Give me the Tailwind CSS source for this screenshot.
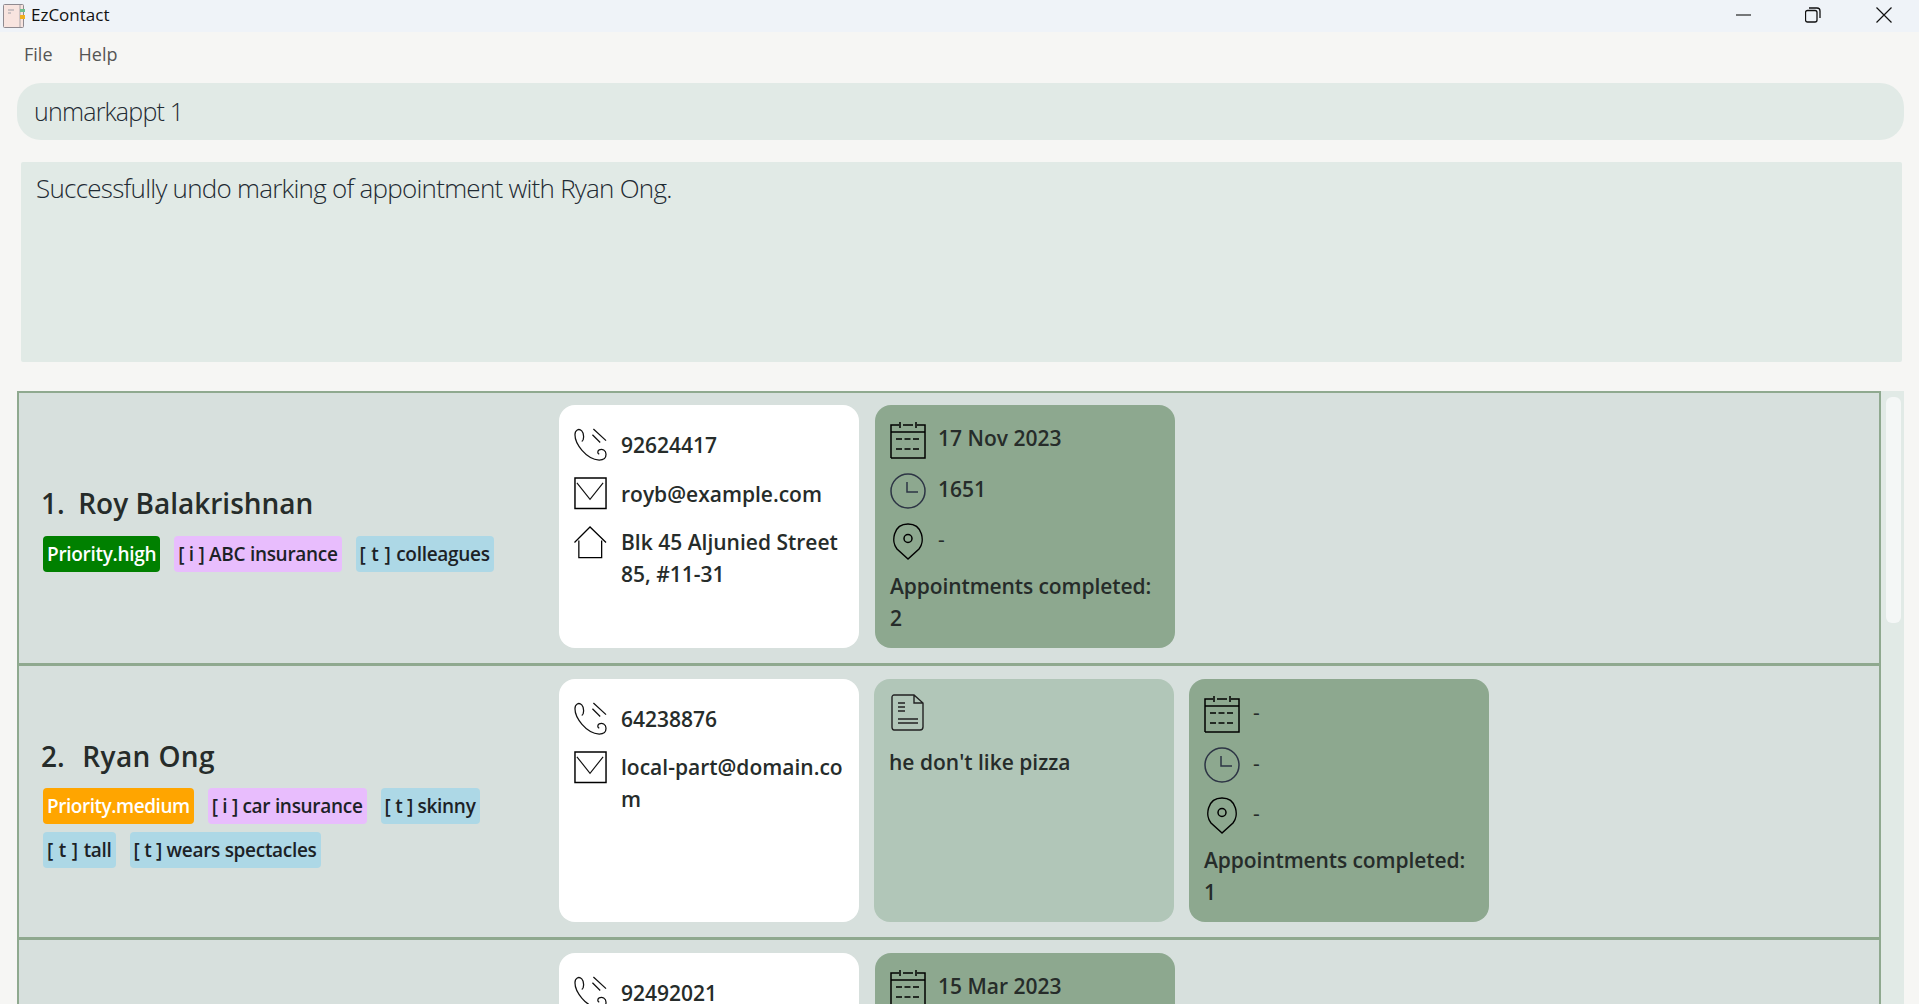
<!DOCTYPE html>
<html lang="en">
<head>
    <meta charset="UTF-8">
    <title>EzContact</title>
    <script src="https://cdn.jsdelivr.net/npm/@tailwindcss/browser@4"></script>
</head>
<body class="bg-[#f6f6f4] text-[#262c2a] font-['Open_Sans','Noto_Sans',sans-serif] overflow-hidden">
    <!-- Shared icons -->
    <svg class="hidden">
        <symbol id="i-phone" viewBox="0 0 34 34">
            <path d="M8 14C11 12 10 5 8 3C5 0 1 2 1 7C1 16 12 32 26 33C31 33 33 30 33 27C33 23 29 21 26 22.500C24 24 24 26 26 27" fill="none" stroke="#111" stroke-width="1.300"/>
            <path d="M20 1L33 13M19 7L27 15" fill="none" stroke="#111" stroke-width="1.300"/>
        </symbol>
        <symbol id="i-mail" viewBox="0 0 34 34">
            <path d="M1 1H33V32.500H1Z" fill="none" stroke="#000" stroke-width="1.500"/>
            <path d="M3 6L16.500 23L30 6" fill="none" stroke="#111" stroke-width="1.200"/>
        </symbol>
        <symbol id="i-home" viewBox="0 0 34 34">
            <path d="M0.500 17L16.500 1L33 17M5 15V32.500H28.500V15" fill="none" stroke="#000" stroke-width="1.300"/>
        </symbol>
        <symbol id="i-cal" viewBox="0 0 36 37">
            <path d="M1 36V3H9M27 3H35V36H1M1 10H35M13 3H23M10 0V6M26 0V6" fill="none" stroke="#000" stroke-width="1.500"/>
            <path d="M6 17H31M6 27H31" fill="none" stroke="#000" stroke-width="1.600" stroke-dasharray="6 2.500"/>
        </symbol>
        <symbol id="i-clock" viewBox="0 0 36 36">
            <circle cx="18" cy="18" r="17" fill="none" stroke="#2d3545" stroke-width="1.500"/>
            <path d="M17 9V19H28" fill="none" stroke="#2d3545" stroke-width="1.500"/>
        </symbol>
        <symbol id="i-pin" viewBox="0 0 32 37">
            <path d="M16 36L5 26C-1 19 1 1 16 1C31 1 33 19 27 26Z" fill="none" stroke="#000" stroke-width="1.500"/>
            <circle cx="16" cy="15.500" r="4" fill="none" stroke="#000" stroke-width="1.500"/>
        </symbol>
    </svg>

    <!-- Title bar -->
    <div class="h-8 bg-[#eff3f8] flex items-center">
        <svg class="ml-[3px] w-[23px] h-[24px]" viewBox="0 0 23 24">
            <rect x="0.500" y="0.500" width="20" height="23" rx="1" fill="#f8e4df" stroke="#8f8a90"/>
            <path d="M5 6H11M5 9H8" stroke="#a0a0a8"/>
            <path d="M17 1V23" stroke="#a8a4a8"/>
            <rect x="17" y="5" width="5" height="3" fill="#6fc090"/>
            <rect x="17" y="11" width="5" height="4" fill="#f0b020"/>
        </svg>
        <span class="ml-[5px] pb-[2px] text-[17px] text-[#111]">EzContact</span>
        <div class="ml-auto flex items-center pb-[3px]">
            <svg class="w-4 h-4 mr-[53px]" viewBox="0 0 16 16"><path d="M0 8H15" stroke="#111" stroke-width="1.100"/></svg>
            <svg class="w-4 h-4 mr-[55px]" viewBox="0 0 16 16"><rect x="0.500" y="3.500" width="11.500" height="11.500" rx="2" fill="none" stroke="#111" stroke-width="1.300"/><path d="M4 1H12C14 1 15 2 15 4V11" fill="none" stroke="#111" stroke-width="1.300"/></svg>
            <svg class="w-4 h-4 mr-[27px]" viewBox="0 0 16 16"><path d="M0.500 0.500L15.500 15.500M15.500 0.500L0.500 15.500" stroke="#111" stroke-width="1.200"/></svg>
        </div>
    </div>

    <!-- Menu bar -->
    <div class="h-[43px] flex items-center pt-[2px] pl-[24px] gap-[26px] text-[18px] text-[#555]">
        <span>File</span>
        <span>Help</span>
    </div>

    <!-- Command box -->
    <div class="mt-2 ml-[17px] w-[1887px] h-[57px] rounded-[24px] bg-[#e1eae6] flex items-center pl-[17px] pt-[1px] text-[25px] font-light tracking-[-0.8px] text-[#1f2b33]">unmarkappt 1</div>

    <!-- Result display -->
    <div class="mt-[22px] ml-[21px] w-[1881px] h-[200px] rounded-[2px] bg-[#e1eae6] pl-[15px] pt-[7px] text-[26px] font-light tracking-[-0.75px] text-[#1f2b33]">Successfully undo marking of appointment with Ryan Ong.</div>

    <!-- Person list -->
    <div class="mt-[29px] ml-[17px] flex w-[1887px] h-[613px] overflow-hidden">
        <div class="w-[1864px] border-x-2 border-t-2 border-[#8fa98f]">
            <!-- Row 1 -->
            <div class="h-[273px] bg-[#d7e0dd] border-b-[3px] border-[#8fa98f] flex pt-[12px]">
                <div class="w-[540px] pl-[22px] flex flex-col justify-center pb-[15px]">
                    <div class="text-[28px] font-semibold">1.&nbsp; <span class="-ml-[1px]">Roy Balakrishnan</span></div>
                    <div class="mt-[12px] ml-[2px] flex flex-wrap gap-x-[14px] gap-y-[8px] text-[19px] font-semibold tracking-[-0.3px] text-[#1c2226]">
                        <span class="h-9 leading-9 px-1 rounded-[4px] bg-[#008000] text-white">Priority.high</span>
                        <span class="h-9 leading-9 px-1 rounded-[4px] bg-[#e8bdfd]">[ i ] ABC insurance</span>
                        <span class="h-9 leading-9 px-1 rounded-[4px] bg-[#add8e6] [word-spacing:1.200px]">[ t ] colleagues</span>
                    </div>
                </div>
                <div class="w-[300px] h-[243px] rounded-[16px] bg-white pl-[15px] pr-[10px] pt-[23px] text-[21px] font-semibold leading-8">
                    <div class="flex gap-[14px] h-[49px]"><svg class="w-[33px] h-[33px] shrink-0"><use href="#i-phone"/></svg><span class="pt-[1px]">92624417</span></div>
                    <div class="flex gap-[14px] h-[49px]"><svg class="w-[33px] h-[33px] shrink-0"><use href="#i-mail"/></svg><span class="pt-[1px]">royb@example.com</span></div>
                    <div class="flex gap-[14px]"><svg class="w-[33px] h-[33px] shrink-0"><use href="#i-home"/></svg><span>Blk 45 Aljunied Street 85, #11-31</span></div>
                </div>
                <div class="ml-[16px] w-[300px] h-[243px] rounded-[16px] bg-[#8da88f] pl-[15px] pr-[10px] pt-[17px] text-[21px] font-semibold leading-8">
                    <div class="flex gap-[12px] h-[51px]"><svg class="w-[36px] h-[37px] shrink-0"><use href="#i-cal"/></svg><span>17 Nov 2023</span></div>
                    <div class="flex gap-[12px] h-[50px]"><svg class="w-[36px] h-[36px] shrink-0"><use href="#i-clock"/></svg><span>1651</span></div>
                    <div class="flex gap-[12px] h-[47px]"><svg class="w-[36px] h-[37px] shrink-0"><use href="#i-pin"/></svg><span class="font-normal">-</span></div>
                    <div class="tracking-[-0.1px]">Appointments completed:</div>
                    <div>2</div>
                </div>
            </div>
            <!-- Row 2 -->
            <div class="h-[274px] bg-[#d7e0dd] border-b-[3px] border-[#8fa98f] flex pt-[13px]">
                <div class="w-[540px] pl-[22px] flex flex-col pt-[56px]">
                    <div class="text-[28px] font-semibold">2.&nbsp; <span class="ml-[3px] tracking-[0.4px]">Ryan Ong</span></div>
                    <div class="mt-[11px] ml-[2px] flex flex-wrap gap-x-[14px] gap-y-[8px] text-[19px] font-semibold tracking-[-0.3px] text-[#1c2226]">
                        <span class="h-9 leading-9 px-1 rounded-[4px] bg-[#ffa500] text-white tracking-[-0.46px]">Priority.medium</span>
                        <span class="h-9 leading-9 px-1 rounded-[4px] bg-[#e8bdfd]">[ i ] car insurance</span>
                        <span class="h-9 leading-9 px-1 rounded-[4px] bg-[#add8e6]">[ t ] skinny</span>
                        <span class="h-9 leading-9 px-1 rounded-[4px] bg-[#add8e6] [word-spacing:1.200px]">[ t ] tall</span>
                        <span class="h-9 leading-9 px-1 rounded-[4px] bg-[#add8e6]">[ t ] wears spectacles</span>
                    </div>
                </div>
                <div class="w-[300px] h-[243px] rounded-[16px] bg-white pl-[15px] pr-[10px] pt-[23px] text-[21px] font-semibold leading-8">
                    <div class="flex gap-[14px] h-[49px]"><svg class="w-[33px] h-[33px] shrink-0"><use href="#i-phone"/></svg><span class="pt-[1px]">64238876</span></div>
                    <div class="flex gap-[14px]"><svg class="w-[33px] h-[33px] shrink-0"><use href="#i-mail"/></svg><span class="break-all">local-part@domain.com</span></div>
                </div>
                <div class="ml-[15px] w-[300px] h-[243px] rounded-[16px] bg-[#b1c6b8] pl-[15px] pt-[15px] text-[21px] font-semibold">
                    <svg class="ml-[2px] w-[33px] h-[37px]" viewBox="0 0 33 37"><path d="M3 1H23L32 9V33C32 35 31 36 29 36H3C2 36 1 35 1 33V3C1 2 2 1 3 1ZM23 1V9H32" fill="none" stroke="#222" stroke-width="1.400"/><path d="M7 9H14M7 13H14M7 17H14M7 25H27M7 29H27" stroke="#222" stroke-width="1.400"/></svg>
                    <div class="mt-[15px] leading-8">he don't like pizza</div>
                </div>
                <div class="ml-[15px] w-[300px] h-[243px] rounded-[16px] bg-[#8da88f] pl-[15px] pr-[5px] pt-[17px] text-[21px] font-semibold leading-8">
                    <div class="flex gap-[13px] h-[51px]"><svg class="w-[36px] h-[37px] shrink-0"><use href="#i-cal"/></svg><span class="font-normal">-</span></div>
                    <div class="flex gap-[13px] h-[50px]"><svg class="w-[36px] h-[36px] shrink-0"><use href="#i-clock"/></svg><span class="font-normal">-</span></div>
                    <div class="flex gap-[13px] h-[47px]"><svg class="w-[36px] h-[37px] shrink-0"><use href="#i-pin"/></svg><span class="font-normal">-</span></div>
                    <div class="tracking-[-0.1px]">Appointments completed:</div>
                    <div>1</div>
                </div>
            </div>
            <!-- Row 3 -->
            <div class="h-[300px] bg-[#d7e0dd] flex pt-[13px]">
                <div class="w-[540px]"></div>
                <div class="w-[300px] h-[243px] rounded-[16px] bg-white pl-[15px] pr-[10px] pt-[23px] text-[21px] font-semibold leading-8">
                    <div class="flex gap-[14px] h-[49px]"><svg class="w-[33px] h-[33px] shrink-0"><use href="#i-phone"/></svg><span class="pt-[1px]">92492021</span></div>
                </div>
                <div class="ml-[16px] w-[300px] h-[243px] rounded-[16px] bg-[#8da88f] pl-[15px] pr-[10px] pt-[17px] text-[21px] font-semibold leading-8">
                    <div class="flex gap-[12px] h-[51px]"><svg class="w-[36px] h-[37px] shrink-0"><use href="#i-cal"/></svg><span>15 Mar 2023</span></div>
                </div>
            </div>
        </div>
        <!-- Scrollbar -->
        <div class="flex-1 bg-[#e1eae6] pt-[6px] pl-[5px]">
            <div class="w-[15px] h-[226px] rounded-[6px] bg-[#f4f7f6]"></div>
        </div>
    </div>
</body>
</html>
